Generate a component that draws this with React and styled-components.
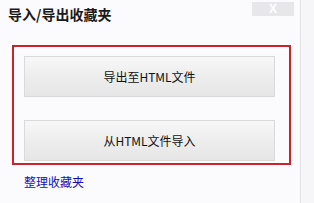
import React from 'react'
import styled, {createGlobalStyle} from "styled-components"

const GlobalStyle = createGlobalStyle`
    *, *::before, *::after {
        box-sizing: border-box;
    }
    html, body {
        margin: 0;
        padding: 0;
        background: #f6f6f8;
    }
    body {
        font-family: "Noto Sans CJK SC", "Liberation Sans", sans-serif;
    }
`

const Dialog = styled.div`
    width: 301px;
    height: 203px;
    background-color: #fbfbfd;
    border-right: 1px solid #e2e2e4;
    display: flex;
    flex-direction: column;
`
const Header = styled.div`
    height: 30px;
    display: flex;
    justify-content: space-between;
    align-items: flex-start;
    padding-left: 8px;
    padding-right: 6px;
`
const Title = styled.h1`
    margin: 6px 0 0 0;
    font-size: 14px;
    line-height: 17px;
    font-weight: bold;
    color: #1a1a1a;
`
const CloseButton = styled.div`
    margin-top: 2px;
    width: 42px;
    height: 14px;
    background-color: #e7e7e9;
    color: #ffffff;
    font-family: "Liberation Sans", sans-serif;
    font-size: 12px;
    font-weight: bold;
    line-height: 14px;
    text-align: center;
`
const Frame = styled.div`
    margin: 15px 0 0 12px;
    width: 279px;
    height: 120px;
    border: 2px solid #c9242d;
    padding: 9px 14px 0 10px;
    display: flex;
    flex-direction: column;
    gap: 23px;
`
const Button = styled.button`
    height: 41px;
    width: 251px;
    border: 1px solid #d9d9db;
    background: linear-gradient(180deg, #f7f7f7 0%, #ededed 50%, #e6e6e6 100%);
    font-family: "Noto Sans CJK SC", "Liberation Sans", sans-serif;
    font-size: 12px;
    color: #111111;
    padding: 0;
    cursor: pointer;
`
const Link = styled.a`
    margin: 10px 0 0 24px;
    font-size: 12px;
    line-height: 13px;
    color: #1010b8;
    text-decoration: none;
    cursor: pointer;
`

const App = () => {
    return (
        <>
            <GlobalStyle/>
            <Dialog>
                <Header>
                    <Title>导入/导出收藏夹</Title>
                    <CloseButton>X</CloseButton>
                </Header>
                <Frame>
                    <Button>导出至HTML文件</Button>
                    <Button>从HTML文件导入</Button>
                </Frame>
                <Link>整理收藏夹</Link>
            </Dialog>
        </>
    )
}

export default App
